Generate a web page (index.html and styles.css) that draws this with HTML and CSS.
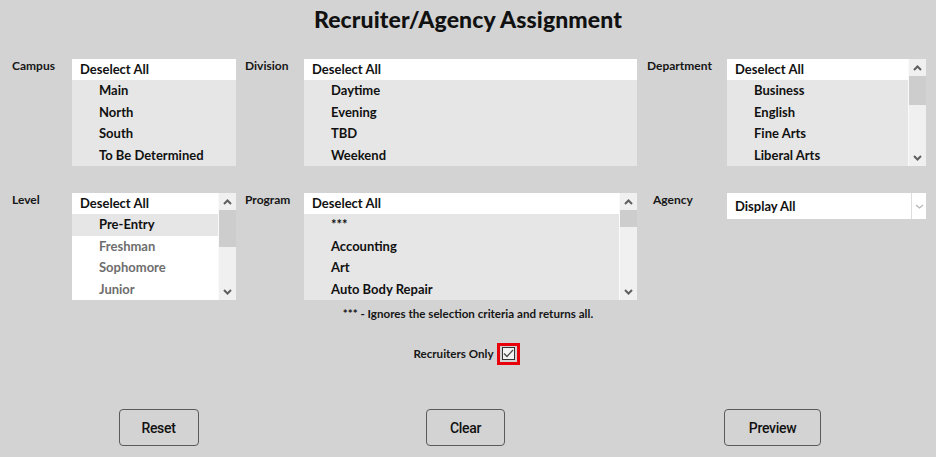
FILE: index.html
```html
<!DOCTYPE html>
<html lang="en">
<head>
<meta charset="utf-8">
<title>Recruiter/Agency Assignment</title>
<link rel="stylesheet" href="styles.css">
</head>
<body>
<div class="page">
  <h1 class="title">Recruiter/Agency Assignment</h1>

  <div class="filters">
    <div class="label">Campus</div>
    <div class="listbox">
      <ul class="options">
        <li class="head">Deselect All</li>
        <li>Main</li>
        <li>North</li>
        <li>South</li>
        <li>To Be Determined</li>
      </ul>
    </div>

    <div class="label pad9">Division</div>
    <div class="listbox">
      <ul class="options">
        <li class="head">Deselect All</li>
        <li>Daytime</li>
        <li>Evening</li>
        <li>TBD</li>
        <li>Weekend</li>
      </ul>
    </div>

    <div class="label pad10">Department</div>
    <div class="listbox">
      <ul class="options">
        <li class="head">Deselect All</li>
        <li>Business</li>
        <li>English</li>
        <li>Fine Arts</li>
        <li>Liberal Arts</li>
      </ul>
      <div class="scrollbar">
        <span class="arrow"><svg width="9" height="6" viewBox="0 0 9 6"><polyline points="1,5 4.5,1.5 8,5" fill="none" stroke="#5f5f5f" stroke-width="2"/></svg></span>
        <span class="track"><span class="thumb thumb-dept"></span></span>
        <span class="arrow"><svg width="9" height="6" viewBox="0 0 9 6"><polyline points="1,1 4.5,4.5 8,1" fill="none" stroke="#5f5f5f" stroke-width="2"/></svg></span>
      </div>
    </div>

    <div class="label">Level</div>
    <div class="listbox">
      <ul class="options light">
        <li class="head">Deselect All</li>
        <li class="sel">Pre-Entry</li>
        <li class="dim">Freshman</li>
        <li class="dim">Sophomore</li>
        <li class="dim">Junior</li>
      </ul>
      <div class="scrollbar">
        <span class="arrow"><svg width="9" height="6" viewBox="0 0 9 6"><polyline points="1,5 4.5,1.5 8,5" fill="none" stroke="#5f5f5f" stroke-width="2"/></svg></span>
        <span class="track"><span class="thumb thumb-level"></span></span>
        <span class="arrow"><svg width="9" height="6" viewBox="0 0 9 6"><polyline points="1,1 4.5,4.5 8,1" fill="none" stroke="#5f5f5f" stroke-width="2"/></svg></span>
      </div>
    </div>

    <div class="label pad9">Program</div>
    <div class="listbox">
      <ul class="options">
        <li class="head">Deselect All</li>
        <li>***</li>
        <li>Accounting</li>
        <li>Art</li>
        <li>Auto Body Repair</li>
      </ul>
      <div class="scrollbar">
        <span class="arrow"><svg width="9" height="6" viewBox="0 0 9 6"><polyline points="1,5 4.5,1.5 8,5" fill="none" stroke="#5f5f5f" stroke-width="2"/></svg></span>
        <span class="track"><span class="thumb thumb-prog"></span></span>
        <span class="arrow"><svg width="9" height="6" viewBox="0 0 9 6"><polyline points="1,1 4.5,4.5 8,1" fill="none" stroke="#5f5f5f" stroke-width="2"/></svg></span>
      </div>
    </div>

    <div class="label pad16">Agency</div>
    <div class="select-cell">
      <div class="select">
        <span class="select-value">Display All</span>
        <span class="select-btn"><svg width="9" height="5" viewBox="0 0 9 5"><polyline points="1,1 4.5,4 8,1" fill="none" stroke="#b5b5b5" stroke-width="1.2"/></svg></span>
      </div>
    </div>
  </div>

  <p class="note">*** - Ignores the selection criteria and returns all.</p>

  <div class="recruiters">
    <span class="rec-label">Recruiters Only</span>
    <span class="check-outline">
      <span class="checkbox"><svg width="11" height="9" viewBox="0 0 11 9"><polyline points="1,4.5 4,7.5 10,1" fill="none" stroke="#4d4d4d" stroke-width="1.3"/></svg></span>
    </span>
  </div>

  <div class="actions">
    <div class="action-cell"><button class="btn btn-reset">Reset</button></div>
    <div class="action-cell"><button class="btn btn-clear">Clear</button></div>
    <div class="action-cell"><button class="btn btn-preview">Preview</button></div>
  </div>
</div>
</body>
</html>
```

FILE: styles.css
```css
html, body {
  margin: 0;
  padding: 0;
  background: #d3d3d3;
}

body {
  font-family: "Lato", "Open Sans", sans-serif;
  color: #111;
}

.page {
  width: 936px;
  height: 457px;
  display: flex;
  flex-direction: column;
}

.title {
  margin: 0;
  height: 59px;
  line-height: 38px;
  text-align: center;
  font-size: 23px;
  font-weight: 900;
  letter-spacing: 0.1px;
  color: #111;
}

.filters {
  display: grid;
  grid-template-columns: 60px 164px 68px 333px 90px 199px;
  grid-template-rows: 107px 107px;
  row-gap: 27px;
  padding-left: 12px;
}

.label {
  font-size: 12px;
  font-weight: 700;
  line-height: 14px;
  color: #161616;
}

.pad9 { padding-left: 9px; }
.pad10 { padding-left: 10px; }
.pad16 { padding-left: 16px; }

.listbox {
  display: flex;
  height: 107px;
  background: #e6e6e6;
  overflow: hidden;
}

.options {
  list-style: none;
  margin: 0;
  padding: 0;
  flex: 1;
  min-width: 0;
}

.options li {
  height: 21.5px;
  line-height: 21.5px;
  padding-left: 27px;
  font-size: 13px;
  font-weight: 700;
  white-space: nowrap;
  color: #111;
}

.options li.head {
  height: 21px;
  line-height: 21px;
  padding-left: 8px;
  background: #fff;
}

.options.light {
  background: #fff;
}

.options li.sel {
  background: #e6e6e6;
}

.options li.dim {
  color: #6e6e6e;
}

.scrollbar {
  width: 17px;
  flex: none;
  display: flex;
  flex-direction: column;
  background: #f0f0f0;
  border-left: 1px solid #fafafa;
}

.arrow {
  height: 17px;
  flex: none;
  display: flex;
  align-items: center;
  justify-content: center;
}

.track {
  flex: 1;
  display: flex;
  flex-direction: column;
}

.thumb {
  display: block;
  background: #cdcdcd;
}

.thumb-dept { height: 29px; }
.thumb-level { height: 37px; }
.thumb-prog { height: 17px; }

.select {
  height: 26px;
  background: #fff;
  display: flex;
  align-items: center;
}

.select-value {
  flex: 1;
  padding-left: 8px;
  font-size: 13px;
  font-weight: 700;
  color: #111;
}

.select-btn {
  width: 14px;
  height: 26px;
  border-left: 1px solid #dcdcdc;
  display: flex;
  align-items: center;
  justify-content: center;
}

.note {
  margin: 7px 0 0;
  line-height: 14px;
  height: 14px;
  font-size: 11.6px;
  font-weight: 700;
  text-align: center;
  color: #161616;
}

.recruiters {
  margin-top: 21px;
  height: 23px;
  display: flex;
  align-items: center;
  justify-content: center;
  gap: 3px;
  padding-right: 3px;
}

.rec-label {
  font-size: 11.6px;
  font-weight: 700;
  color: #161616;
}

.check-outline {
  width: 17px;
  height: 16px;
  border: 3px solid #e8000b;
  display: flex;
  align-items: center;
  justify-content: center;
}

.checkbox {
  width: 11px;
  height: 11px;
  border: 1px solid #333;
  background: #f4f4f4;
  display: flex;
  align-items: center;
  justify-content: center;
}

.actions {
  margin-top: 44px;
  display: grid;
  grid-template-columns: repeat(3, 307px);
  padding-left: 5px;
}

.action-cell {
  display: flex;
  justify-content: center;
}

.btn {
  height: 37px;
  background: #d3d3d3;
  border: 1px solid #5a5a5a;
  border-radius: 4px;
  font-family: "Roboto", "Liberation Sans", sans-serif;
  font-size: 14px;
  font-weight: 500;
  letter-spacing: -0.3px;
  color: #111;
  padding: 0;
}

.btn-reset { width: 80px; }
.btn-clear { width: 79px; }
.btn-preview { width: 97px; }
```
